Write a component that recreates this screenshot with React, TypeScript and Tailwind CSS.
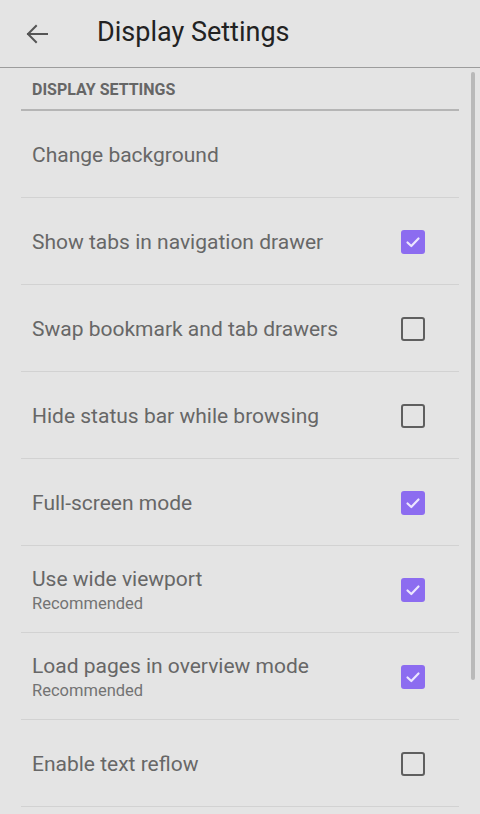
import React from 'react';

type Pref = {
  title: string;
  summary?: string;
  checked?: boolean;
};

const prefs: Pref[] = [
  { title: 'Change background' },
  { title: 'Show tabs in navigation drawer', checked: true },
  { title: 'Swap bookmark and tab drawers', checked: false },
  { title: 'Hide status bar while browsing', checked: false },
  { title: 'Full-screen mode', checked: true },
  { title: 'Use wide viewport', summary: 'Recommended', checked: true },
  { title: 'Load pages in overview mode', summary: 'Recommended', checked: true },
  { title: 'Enable text reflow', checked: false },
];

const CheckBox: React.FC<{ checked: boolean }> = ({ checked }) =>
  checked ? (
    <div className="w-[24px] h-[24px] rounded-[3px] bg-[#8c6cf0] flex items-center justify-center">
      <svg width="18" height="18" viewBox="0 0 18 18" fill="none">
        <path d="M3.5 9.5 L7.3 13 L14.5 5.5" stroke="#ece6ff" strokeWidth="2.2" strokeLinecap="round" strokeLinejoin="round" />
      </svg>
    </div>
  ) : (
    <div className="w-[24px] h-[24px] rounded-[3px] border-[2.5px] border-[#5f5f5f]" />
  );

export default function App() {
  return (
    <div className="relative w-[480px] h-[814px] overflow-hidden bg-[#e4e4e4] font-['Roboto',sans-serif]">
      <header className="h-[68px] flex items-center border-b-[1.5px] border-[#9c9c9c]">
        <svg className="ml-[25px]" width="24" height="24" viewBox="0 0 24 24" fill="none">
          <path d="M22 12 H3 M11 4 L3 12 L11 20" stroke="#555" strokeWidth="2" strokeLinecap="square" />
        </svg>
        <h1 className="ml-[48px] text-[27px] text-[#222] leading-none pb-[2px]">Display Settings</h1>
      </header>

      <div className="px-[21px] w-[480px]">
        <div className="w-[438px]">
          <div className="h-[43px] flex items-center pl-[11px] border-b-2 border-[#b5b5b5]">
            <span className="text-[16px] font-bold text-[#666] pt-[3px]">DISPLAY SETTINGS</span>
          </div>
          {prefs.map((p) => (
            <div key={p.title} className="h-[87px] flex items-center pl-[11px] pr-[34px] pt-[2px] border-b border-[#d2d2d2]">
              <div className="flex-1 flex flex-col">
                <span className="text-[21px] text-[#676767] leading-[26px]">{p.title}</span>
                {p.summary && (
                  <span className="text-[16.5px] text-[#737373] leading-[22px] mt-[1px]">{p.summary}</span>
                )}
              </div>
              {p.checked !== undefined && <CheckBox checked={p.checked} />}
            </div>
          ))}
        </div>
      </div>

      <div className="absolute left-[471px] top-[72px] w-[4px] h-[608px] rounded-sm bg-[#b9b9b9]" />
    </div>
  );
}
